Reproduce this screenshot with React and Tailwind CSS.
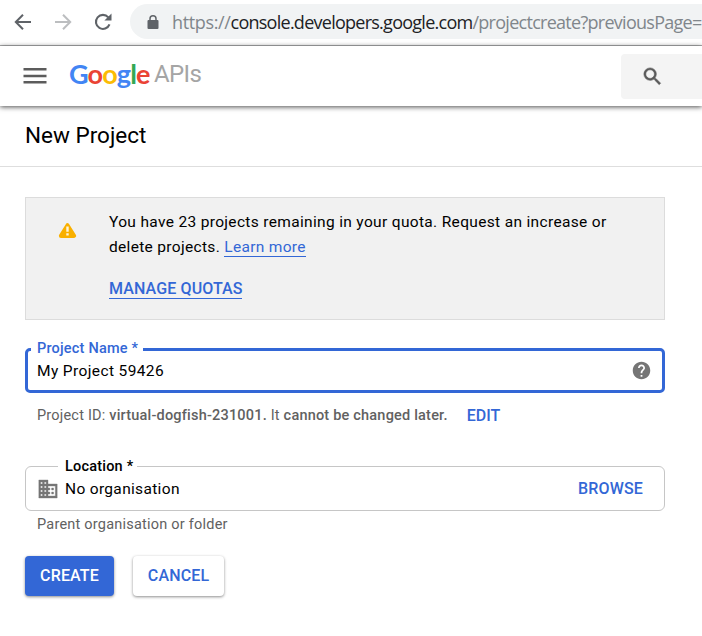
import React from "react";

function BrowserBar() {
  return (
    <div className="flex h-[46px] items-start border-b border-[#b0b1b2] bg-white">
      <div className="flex h-[43px] w-[130px] shrink-0 items-center pl-[13px]">
        <svg width="20" height="20" viewBox="0 0 20 20" fill="none" stroke="#5f6368" strokeWidth="2">
          <path d="M18 10H3M10 2.8L2.8 10L10 17.2" />
        </svg>
        <svg className="ml-5" width="20" height="20" viewBox="0 0 20 20" fill="none" stroke="#bcbec0" strokeWidth="2">
          <path d="M2 10H17M10 2.8L17.2 10L10 17.2" />
        </svg>
        <svg className="ml-5" width="20" height="20" viewBox="0 0 20 20" fill="none" stroke="#5f6368" strokeWidth="2.1">
          <path d="M16.5 12.4A7 7 0 1 1 15.3 5.4" />
          <path d="M18.5 1.5V8.6H11.4Z" fill="#5f6368" stroke="none" />
        </svg>
      </div>
      <div className="mt-1 flex h-[35px] flex-1 items-center rounded-l-full bg-[#f1f3f4] pl-[17px]">
        <svg className="mt-0.5 shrink-0" width="12" height="15" viewBox="0 0 12 15">
          <path d="M1.5 5H10.500Q11.500 5 11.500 6V13Q11.500 14 10.500 14H1.500Q.5 14 .5 13V6Q.5 5 1.500 5Z" fill="#5f6368" />
          <path d="M3 5.500V3.800a3 3 0 0 1 6 0V5.500" fill="none" stroke="#5f6368" strokeWidth="1.500" />
        </svg>
        <div className="ml-[13px] flex whitespace-nowrap font-['Open_Sans',sans-serif] text-[18px] leading-[34px] text-[#80868b]">
          <span className="tracking-[-0.36px]">https://</span>
          <span className="tracking-[-0.74px] text-[#202124]">console.developers.google.com</span>
          <span className="tracking-[-0.72px]">/projectcreate?previousPage=</span>
        </div>
      </div>
    </div>
  );
}

function Header() {
  return (
    <header className="relative flex h-[60px] items-start bg-white shadow-[0_1px_5px_rgba(0,0,0,0.7)]">
      <svg className="ml-[23px] mt-[22px]" width="24" height="16" viewBox="0 0 24 16" fill="#5c5c5c">
        <path d="M.5 0H23.500V2.500H.5zM.5 6.700H23.500V9.200H.5zM.5 13H23.500V15.500H.5z" />
      </svg>
      <div className="ml-[22px] mt-3 flex w-[170px] whitespace-nowrap leading-[32px]">
        <span className="w-[81px] font-['Lato',sans-serif] text-[27px] font-bold tracking-[-0.85px]">
          <span className="text-[#4285f4]">G</span>
          <span className="text-[#ea4335]">o</span>
          <span className="text-[#fbbc05]">o</span>
          <span className="text-[#4285f4]">g</span>
          <span className="text-[#34a853]">l</span>
          <span className="text-[#ea4335]">e</span>
        </span>
        <span className="ml-[4px] font-['Roboto',sans-serif] text-[24px] tracking-[-0.6px] text-[#a5a5a5]">APIs</span>
      </div>
      <div className="ml-auto mt-2 flex h-[45px] w-[81px] items-center rounded-l-sm bg-[#f4f4f4] pl-5">
        <svg width="23" height="23" viewBox="0 0 24 24" fill="#5a5a5a" stroke="#5a5a5a" strokeWidth=".6">
          <path d="M15.500 14h-.79l-.28-.27A6.471 6.471 0 0 0 16 9.500 6.500 6.500 0 1 0 9.500 16c1.610 0 3.090-.59 4.230-1.570l.27.28v.79l5 4.990L20.490 19l-4.990-5zm-6 0C7.010 14 5 11.990 5 9.500S7.010 5 9.500 5 14 7.010 14 9.500 11.990 14 9.500 14z" />
        </svg>
      </div>
    </header>
  );
}

function QuotaNotice() {
  return (
    <section className="flex h-[123px] border border-[#dcdcdc] bg-[#f1f1f1] text-[15.500px] leading-[25px]">
      <svg className="ml-[32px] mt-[25px] shrink-0" width="19" height="15" viewBox="-.5 0 19 15">
        <path d="M9 2.200L15.600 12.900H2.400Z" fill="#f9b000" stroke="#f9b000" strokeWidth="4" strokeLinejoin="round" />
        <path d="M9 3.500V8.700M9 10.300V12.500" stroke="#fff5dc" strokeWidth="2.400" />
      </svg>
      <div className="ml-8 mt-3 whitespace-nowrap">
        <p className="tracking-[0.335px]">You have 23 projects remaining in your quota. Request an increase or</p>
        <p className="h-[25px] tracking-[0.32px]">
          delete projects. <a className="inline-block h-[19px] border-b border-[#3367d6] leading-[19px] text-[#3367d6]">Learn more</a>
        </p>
        <a className="mt-[18px] block h-[21px] w-[133px] border-b border-[#3367d6] text-[16px] font-medium leading-[21px] tracking-[0.12px] text-[#3367d6]">
          MANAGE QUOTAS
        </a>
      </div>
    </section>
  );
}

function ProjectForm() {
  return (
    <div className="flex flex-col text-[15.500px]">
      <div className="relative mt-7 flex h-[45px] items-center justify-between rounded-[5px] border-[3px] border-[#3367d6] pl-[9px] pr-[10px]">
        <label className="absolute -top-[12px] left-[3px] bg-white pl-1.5 pr-[5px] text-[14.500px] font-medium leading-5 tracking-[0.2px] text-[#3367d6]">
          Project Name *
        </label>
        <span className="pt-0.5 tracking-[0.38px]">My Project 59426</span>
        <svg width="21" height="21" viewBox="0 0 24 24" fill="#757575">
          <path d="M12 2C6.480 2 2 6.480 2 12s4.480 10 10 10 10-4.480 10-10S17.520 2 12 2zm1 17h-2v-2h2v2zm2.070-7.750l-.9.920C13.450 12.900 13 13.500 13 15h-2v-.5c0-1.100.450-2.100 1.170-2.830l1.240-1.260c.37-.36.590-.86.590-1.410 0-1.100-.9-2-2-2s-2 .9-2 2H8c0-2.210 1.790-4 4-4s4 1.790 4 4c0 .88-.36 1.680-.93 2.250z" />
        </svg>
      </div>
      <div className="mt-3 flex h-[22px] items-center whitespace-nowrap pl-3 text-[14.500px] tracking-[0.2px] text-[#616161]">
        <span>Project ID:&nbsp;</span>
        <span className="font-medium">virtual-dogfish-231001.</span>
        <span>&nbsp;It&nbsp;</span>
        <span className="font-medium">cannot be changed later.</span>
        <a className="ml-[19px] text-[16px] font-medium tracking-normal text-[#3367d6]">EDIT</a>
      </div>
      <div className="relative mt-[39px] flex h-[45px] items-center rounded-[6px] border border-[#c6c6c6] pl-[11px] pr-[21px]">
        <label className="absolute -top-[10px] left-8 bg-white pl-[7px] pr-1 text-[14.500px] font-medium leading-5 tracking-[0.2px]">
          Location *
        </label>
        <svg className="mt-px" width="22" height="24" viewBox="0 0 24 24" preserveAspectRatio="none" fill="#757575" stroke="#757575" strokeWidth=".4">
          <path d="M12 7V3H2v18h20V7H12zM6 19H4v-2h2v2zm0-4H4v-2h2v2zm0-4H4V9h2v2zm0-4H4V5h2v2zm4 12H8v-2h2v2zm0-4H8v-2h2v2zm0-4H8V9h2v2zm0-4H8V5h2v2zm10 12h-8v-2h2v-2h-2v-2h2v-2h-2V9h8v10zm-2-8h-2v2h2v-2zm0 4h-2v2h2v-2z" />
        </svg>
        <span className="ml-1.5 pt-0.5 tracking-[0.33px]">No organisation</span>
        <a className="ml-auto text-[16px] font-medium tracking-[0.15px] text-[#3367d6]">BROWSE</a>
      </div>
      <p className="mt-1 pl-3 text-[14.500px] leading-5 tracking-[0.22px] text-[#616161]">Parent organisation or folder</p>
      <div className="mt-[21px] flex gap-[19px] text-[16px] font-medium tracking-[0.15px]">
        <button className="h-10 w-[89px] rounded-[4px] bg-[#3367d6] text-white shadow-[0_1px_3px_rgba(0,0,0,0.45)]">CREATE</button>
        <button className="h-10 w-[91px] rounded-[4px] bg-white text-[#3367d6] shadow-[0_1px_3px_rgba(0,0,0,0.45)]">CANCEL</button>
      </div>
    </div>
  );
}

export default function App() {
  return (
    <div className="h-[636px] w-[702px] overflow-hidden bg-white font-['Roboto',sans-serif] text-black">
      <BrowserBar />
      <Header />
      <h1 className="h-[61px] border-b border-[#dedede] pl-[25px] text-[22.500px] leading-[58px]">New Project</h1>
      <main className="ml-[25px] mt-[30px] w-[640px]">
        <QuotaNotice />
        <ProjectForm />
      </main>
    </div>
  );
}
